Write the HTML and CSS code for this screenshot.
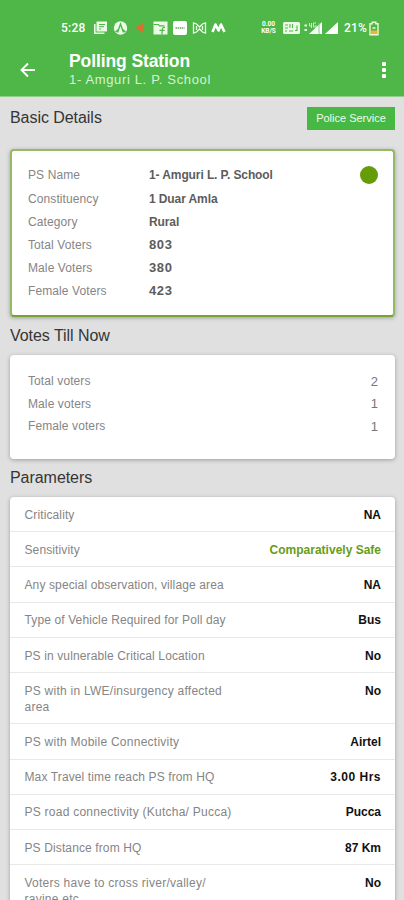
FILE: index.html
```
<!DOCTYPE html>
<html lang="en">
<head>
<meta charset="utf-8">
<title>Polling Station</title>
<link rel="stylesheet" href="styles.css">
</head>
<body>
<header class="top">
  <div class="status">
    <span class="time">5:28</span>
    <svg class="notif" width="138" height="16" viewBox="0 0 138 16">
      <path d="M4.500 1.500h10.500v10H4.500z" fill="#eafae6"/><path d="M2.800 4v9.300h9.700" fill="none" stroke="#eafae6" stroke-width="1.600"/><path d="M7 4.500h6M7 6.700h5M7 9h2" stroke="#4eb748" stroke-width="1"/>
      <circle cx="28.500" cy="8" r="6.700" fill="#eafae6"/><path d="M23.500 12l3.500-3M33.500 12l-3.500-3M25.500 12.500l3-8.500 3 8.500" fill="none" stroke="#4eb748" stroke-width="1.400"/>
      <path d="M43 7.500l9-4.500-1.500 5 1 5z" fill="#e56a2c"/>
      <path d="M61.500 1.500h14v13h-14z" fill="#eafae6"/><path d="M61.500 4.500h5l1 1.300h5M73 7.500c-3-.5-3 1.500-3 7M67.500 10.300h5" fill="none" stroke="#4eb748" stroke-width="1.200"/>
      <rect x="81" y="1" width="14" height="14" rx="2" fill="#fff"/><path d="M83.500 8h9" stroke="#8bbd84" stroke-width="2" stroke-dasharray="1.500 .6"/>
      <path d="M101.500 13V3l3 1 3 3 3-3 3-1v10l-3-1-3-3-3 3zM104.500 6v4M110.500 6v4" fill="none" stroke="#eafae6" stroke-width="1.300"/>
      <path d="M120.500 12l3-7.500 3 6 2.500-6 3.500 7.500" fill="none" stroke="#fff" stroke-width="2.600" stroke-linejoin="round"/>
    </svg>
    <span class="rate"><span>0.00</span><span>KB/S</span></span>
    <svg class="net" width="57" height="16" viewBox="0 0 57 16">
      <rect x="1" y="2" width="17" height="12" rx="1.500" fill="#eafae6"/><path d="M3 5h3M8 4v4M3 8h3M10.500 4v4M3 11h2M7 11h4M15 5.500v5h-2" fill="none" stroke="#4eb748" stroke-width="1.100"/>
      <path d="M22.500 5.500h2.500M22.500 10h2.500" stroke="#eafae6" stroke-width="2"/><path d="M40 2v12H27z" fill="#fff"/><path d="M27.500 3v3h2V3v5M34 3h-2.500v4H34V5" fill="none" stroke="#cdeec8" stroke-width="1"/><path d="M37 3v11" stroke="#7bcb75" stroke-width="1"/>
      <path d="M56 2v12H43z" fill="#fff"/>
    </svg>
    <span class="pct">21%</span>
    <svg class="batt" width="10" height="15" viewBox="0 0 10 15"><path d="M3.200 1.200h3.600v1.500H9v11H1v-11h2.200z" fill="none" stroke="#f2f7d8" stroke-width="1.400"/><path d="M1.800 9.500h6.400V13H1.800z" fill="#eeb438"/><path d="M3.500 7h3" stroke="#e9f6df" stroke-width="1.500"/></svg>
  </div>
  <div class="bar">
    <svg class="back" width="16" height="16" viewBox="0 0 16 16"><path d="M15 8H2M8 1.500L1.500 8 8 14.500" fill="none" stroke="#fff" stroke-width="1.900"/></svg>
    <div class="titles"><h1>Polling Station</h1><p>1- Amguri L. P. School</p></div>
    <div class="more"><i></i><i></i><i></i></div>
  </div>
</header>
<main>
  <div class="head first"><h2>Basic Details</h2><button>Police Service</button></div>
  <section class="card basic">
    <div class="row lead"><span class="k">PS Name</span><b>1- Amguri L. P. School</b><i class="dot"></i></div>
    <div class="row"><span class="k">Constituency</span><b>1 Duar Amla</b></div>
    <div class="row"><span class="k">Category</span><b>Rural</b></div>
    <div class="row"><span class="k">Total Voters</span><b class="num">803</b></div>
    <div class="row"><span class="k">Male Voters</span><b class="num">380</b></div>
    <div class="row"><span class="k">Female Voters</span><b class="num">423</b></div>
  </section>
  <div class="head votes-head"><h2>Votes Till Now</h2></div>
  <section class="card votes">
    <div class="row"><span>Total voters</span><em>2</em></div>
    <div class="row"><span>Male voters</span><em>1</em></div>
    <div class="row"><span>Female voters</span><em>1</em></div>
  </section>
  <div class="head params-head"><h2>Parameters</h2></div>
  <section class="card params">
    <div class="item"><span>Criticality</span><strong>NA</strong></div>
    <div class="item"><span>Sensitivity</span><strong class="safe">Comparatively Safe</strong></div>
    <div class="item"><span>Any special observation, village area</span><strong>NA</strong></div>
    <div class="item"><span>Type of Vehicle Required for Poll day</span><strong>Bus</strong></div>
    <div class="item"><span>PS in vulnerable Critical Location</span><strong>No</strong></div>
    <div class="item"><span class="wide">PS with in LWE/insurgency affected<br>area</span><strong>No</strong></div>
    <div class="item"><span class="wide">PS with Mobile Connectivity</span><strong>Airtel</strong></div>
    <div class="item"><span>Max Travel time reach PS from HQ</span><strong class="time-value">3.00 Hrs</strong></div>
    <div class="item"><span class="wide">PS road connectivity (Kutcha/ Pucca)</span><strong>Pucca</strong></div>
    <div class="item"><span>PS Distance from HQ</span><strong>87 Km</strong></div>
    <div class="item"><span class="wide">Voters have to cross river/valley/<br>ravine etc</span><strong>No</strong></div>
  </section>
</main>
</body>
</html>
```
FILE: styles.css
```
* { box-sizing: border-box; }
body {
  margin: 0;
  height: 900px;
  overflow: hidden;
  background: #e0e0e0;
  font-family: "Liberation Sans", Arial, sans-serif;
  font-size: 12px;
  color: #858585;
}
h1, h2, p { margin: 0; font-weight: 400; }
i, em { font-style: normal; }
svg { display: block; flex: none; }

.top { height: 97px; background: #4eb748; color: #fff; border-bottom: 1px solid #8fce8b; }
.status { display: flex; align-items: center; height: 56px; padding-left: 61px; white-space: nowrap; }
.time { width: 31px; font: 500 12px/16px Roboto, sans-serif; letter-spacing: .2px; }
.rate { width: 17px; margin-left: 30px; display: flex; flex-direction: column; text-align: center; font: 700 6.5px/7px Roboto, sans-serif; }
.net { margin-left: 5px; }
.pct { margin-left: 5px; width: 25px; font: 500 12px/16px Roboto, sans-serif; letter-spacing: .2px; }
.bar { display: flex; align-items: center; height: 28px; padding: 0 18px 0 20px; }
.titles { margin-left: 33px; flex: 1; }
h1 { font-size: 17.5px; line-height: 20px; font-weight: 700; letter-spacing: -.1px; }
.titles p { font-size: 13px; line-height: 18px; letter-spacing: .65px; color: #d6f3d2; }
.more { display: flex; flex-direction: column; gap: 2px; width: 4px; }
.more i { width: 4px; height: 4px; border-radius: 1px; background: #fff; }

main { padding: 0 9px 0 10px; }
.head { display: flex; align-items: center; justify-content: space-between; }
h2 { font-size: 16px; line-height: 20px; color: #353535; letter-spacing: -.05px; }
.first { height: 42px; margin-bottom: 10px; }
button {
  width: 88px; height: 23px; padding: 0; border: 0;
  background: #48b844; color: #effbed;
  font: 11px/23px "Liberation Sans", Arial, sans-serif;
}
.card { background: #fff; border-radius: 4px; box-shadow: 0 1px 4px rgba(0,0,0,.3); }
.basic { height: 168px; padding: 11px 15px 0 16px; border: 2px solid #96b966; border-bottom-color: #76a434; }
.row { display: flex; align-items: center; height: 22.8px; letter-spacing: .1px; }
.lead { height: 25px; margin-bottom: 1px; }
.k { width: 121px; }
.row b { color: #5c5c5c; font-weight: 700; letter-spacing: -.1px; }
.row .num { font-size: 13px; letter-spacing: .6px; }
.dot { width: 18px; height: 18px; margin-left: auto; border-radius: 50%; background: #669c08; }
.votes-head { height: 38px; }
.votes { height: 104px; padding: 15px 17px 0 18px; }
.votes .row { justify-content: space-between; height: 22.6px; }
.votes em { font-size: 13px; color: #777; }
.params-head { height: 38px; }
.item {
  display: flex; justify-content: space-between; padding: 9.600px 14px 8.650px 14.500px;
  line-height: 16px; border-bottom: 1px solid #e8e8e8; letter-spacing: .12px;
}
.item .wide { letter-spacing: .25px; }
.item strong { color: #111; letter-spacing: 0; }
.item .time-value { letter-spacing: .5px; }
.item .safe { color: #669c18; }
```
